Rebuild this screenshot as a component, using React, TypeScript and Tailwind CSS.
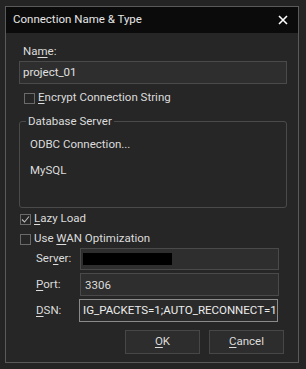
import React from "react";

const font = { fontFamily: 'Roboto, "Liberation Sans", Arial, sans-serif' };

function U({ children }: { children: React.ReactNode }) {
  return <span className="underline underline-offset-2">{children}</span>;
}

function Check({ checked }: { checked?: boolean }) {
  return (
    <div className="w-[11px] h-[11px] border border-[#6a6a6a] bg-[#262626] flex items-center justify-center">
      {checked && (
        <svg width="9" height="9" viewBox="0 0 9 9">
          <path d="M1 4.5 L3.5 7 L8 1.5" stroke="#bdbdbd" strokeWidth="1.1" fill="none" />
        </svg>
      )}
    </div>
  );
}

export default function App() {
  return (
    <div className="w-[306px] h-[369px] bg-[#242424] pt-[6px] pl-[5px] text-[11.5px] text-[#dcdcdc]" style={font}>
      <div className="w-[294px] h-[357px] border border-[#5a5a5a] bg-[#262626] flex flex-col">
        <div className="h-[26px] bg-[#0b0b0b] flex items-center justify-between pl-[7px] pr-[10px] text-[11.5px] text-[#e6e6e6]">
          <span>Connection Name &amp; Type</span>
          <svg width="10" height="10" viewBox="0 0 10 10">
            <path d="M1 1 L9 9 M9 1 L1 9" stroke="#ffffff" strokeWidth="1.6" />
          </svg>
        </div>
        <div className="flex flex-col pl-[13px] pr-[11px]">
          <div className="mt-[10px] h-[16px] leading-[16px] pl-[4px]">
            Na<U>m</U>e:
          </div>
          <div className="mt-[2px] h-[23px] border border-[#4a4a4a] bg-[#2e2e2e] flex items-center pl-[3px] text-[#e0e0e0]">
            project_01
          </div>
          <div className="mt-[8px] flex items-center gap-[3px] pl-[5px] h-[12px]">
            <Check />
            <span>
              <U>E</U>ncrypt Connection String
            </span>
          </div>
          <div className="mt-[17px] h-[87px] border border-[#4a4a4a] rounded-[3px] relative flex flex-col pl-[10px]">
            <span className="absolute left-[6px] top-[-8px] bg-[#262626] px-[2px] leading-[14px]">Database Server</span>
            <div className="mt-[15px] leading-[14px]">ODBC Connection...</div>
            <div className="mt-[12px] leading-[14px]">MySQL</div>
          </div>
          <div className="mt-[5px] flex items-center gap-[3px] pl-[1px] h-[12px]">
            <Check checked />
            <span>
              <U>L</U>azy Load
            </span>
          </div>
          <div className="mt-[8px] flex items-center gap-[3px] pl-[1px] h-[12px]">
            <Check />
            <span>
              Use <U>W</U>AN Optimization
            </span>
          </div>
          <div className="mt-[3px] flex flex-col gap-[3px] pr-[8px]">
            <div className="flex items-center">
              <span className="w-[61px] pl-[17px]">
                Ser<U>v</U>er:
              </span>
              <div className="flex-1 h-[22px] border border-[#4a4a4a] bg-[#2e2e2e] flex items-center pl-[2px]">
                <div className="w-[89px] h-[12px] bg-black" />
              </div>
            </div>
            <div className="flex items-center">
              <span className="w-[61px] pl-[17px]">
                <U>P</U>ort:
              </span>
              <div className="flex-1 h-[23px] border border-[#4a4a4a] bg-[#2e2e2e] flex items-start pt-[3px] pl-[4px]">
                3306
              </div>
            </div>
            <div className="flex items-center">
              <span className="w-[60px] pl-[17px]">
                <U>D</U>SN:
              </span>
              <div className="w-[199px] h-[23px] border border-[#8a8a8a] bg-[#2a2a2a] flex items-center pl-[3px] text-[#ececec] overflow-hidden whitespace-nowrap">
                IG_PACKETS=1;AUTO_RECONNECT=1
              </div>
            </div>
          </div>
          <div className="mt-[8px] flex justify-end gap-[9px] pr-[3px]">
            <div className="w-[75px] h-[24px] border border-[#474747] bg-[#2d2d2d] flex items-center justify-center">
              <span>
                <U>O</U>K
              </span>
            </div>
            <div className="w-[75px] h-[24px] border border-[#474747] bg-[#2d2d2d] flex items-center justify-center">
              <span>
                <U>C</U>ancel
              </span>
            </div>
          </div>
        </div>
      </div>
    </div>
  );
}
